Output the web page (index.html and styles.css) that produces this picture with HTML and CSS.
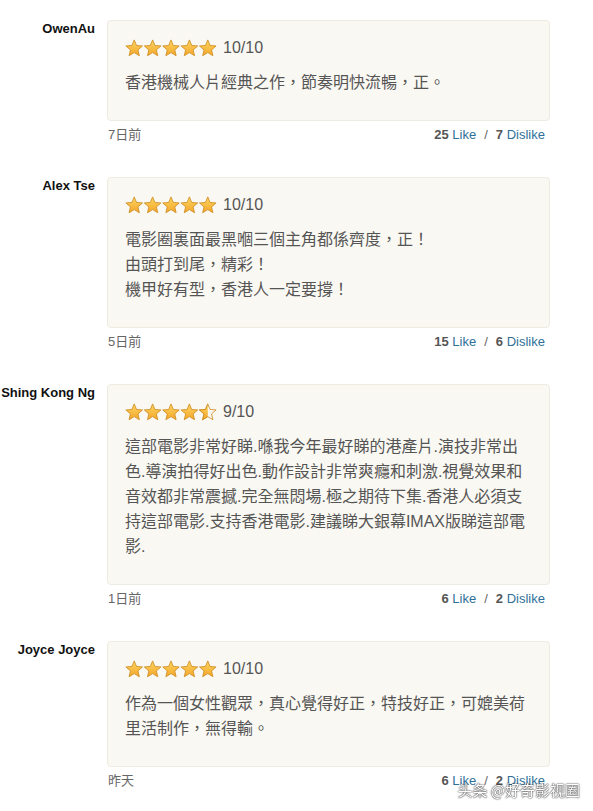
FILE: index.html
```html
<!DOCTYPE html>
<html lang="zh-Hant">
<head>
<meta charset="utf-8">
<title>Reviews</title>
<link rel="stylesheet" href="styles.css">
</head>
<body>
<svg class="defs" width="0" height="0" aria-hidden="true">
  <defs>
    <linearGradient id="gold" x1="0" y1="0" x2="0" y2="1">
      <stop offset="0" stop-color="#fdd763"/>
      <stop offset="1" stop-color="#f3a62a"/>
    </linearGradient>
    <clipPath id="lefthalf"><rect x="0" y="0" width="10" height="20"/></clipPath>
    <polygon id="star" points="10,1 12.53,7.02 19.03,7.56 14.09,11.83 15.58,18.19 10,14.8 4.42,18.19 5.91,11.83 0.97,7.56 7.47,7.02"/>
  </defs>
</svg>

<div class="list">
  <div class="review">
    <div class="name">OwenAu</div>
    <div class="main">
      <div class="card">
        <div class="rating">
          <svg class="stars" viewBox="0 0 100 20" width="92" height="18.4">
            <use href="#star" class="full"/>
            <use href="#star" class="full" x="20"/>
            <use href="#star" class="full" x="40"/>
            <use href="#star" class="full" x="60"/>
            <use href="#star" class="full" x="80"/>
          </svg>
          <span class="score">10/10</span>
        </div>
        <p class="text">香港機械人片經典之作，節奏明快流暢，正。</p>
      </div>
      <div class="footer">
        <span class="date">7日前</span>
        <span class="votes"><b>25</b> <a>Like</a><span class="sep">/</span><b>7</b> <a>Dislike</a></span>
      </div>
    </div>
  </div>

  <div class="review">
    <div class="name">Alex Tse</div>
    <div class="main">
      <div class="card">
        <div class="rating">
          <svg class="stars" viewBox="0 0 100 20" width="92" height="18.4">
            <use href="#star" class="full"/>
            <use href="#star" class="full" x="20"/>
            <use href="#star" class="full" x="40"/>
            <use href="#star" class="full" x="60"/>
            <use href="#star" class="full" x="80"/>
          </svg>
          <span class="score">10/10</span>
        </div>
        <p class="text">電影圈裏面最黑嗰三個主角都係齊度，正！<br>由頭打到尾，精彩！<br>機甲好有型，香港人一定要撐！</p>
      </div>
      <div class="footer">
        <span class="date">5日前</span>
        <span class="votes"><b>15</b> <a>Like</a><span class="sep">/</span><b>6</b> <a>Dislike</a></span>
      </div>
    </div>
  </div>

  <div class="review">
    <div class="name">Shing Kong Ng</div>
    <div class="main">
      <div class="card">
        <div class="rating">
          <svg class="stars" viewBox="0 0 100 20" width="92" height="18.4">
            <use href="#star" class="full"/>
            <use href="#star" class="full" x="20"/>
            <use href="#star" class="full" x="40"/>
            <use href="#star" class="full" x="60"/>
            <g transform="translate(80 0)">
              <use href="#star" class="empty"/>
              <use href="#star" class="full" clip-path="url(#lefthalf)"/>
            </g>
          </svg>
          <span class="score">9/10</span>
        </div>
        <p class="text">這部電影非常好睇.喺我今年最好睇的港產片.演技非常出色.導演拍得好出色.動作設計非常爽癮和刺激.視覺效果和音效都非常震撼.完全無悶場.極之期待下集.香港人必須支持這部電影.支持香港電影.建議睇大銀幕IMAX版睇這部電影.</p>
      </div>
      <div class="footer">
        <span class="date">1日前</span>
        <span class="votes"><b>6</b> <a>Like</a><span class="sep">/</span><b>2</b> <a>Dislike</a></span>
      </div>
    </div>
  </div>

  <div class="review">
    <div class="name">Joyce Joyce</div>
    <div class="main">
      <div class="card">
        <div class="rating">
          <svg class="stars" viewBox="0 0 100 20" width="92" height="18.4">
            <use href="#star" class="full"/>
            <use href="#star" class="full" x="20"/>
            <use href="#star" class="full" x="40"/>
            <use href="#star" class="full" x="60"/>
            <use href="#star" class="full" x="80"/>
          </svg>
          <span class="score">10/10</span>
        </div>
        <p class="text">作為一個女性觀眾，真心覺得好正，特技好正，可媲美荷里活制作，無得輸。</p>
      </div>
      <div class="footer">
        <span class="date">昨天</span>
        <span class="votes"><b>6</b> <a>Like</a><span class="sep">/</span><b>2</b> <a>Dislike</a></span>
      </div>
    </div>
  </div>
</div>

<div class="watermark">头条 @好奇影视圈</div>
</body>
</html>
```

FILE: styles.css
```css
html, body {
  margin: 0;
  padding: 0;
  background: #ffffff;
}

body {
  font-family: "Liberation Sans", "Noto Sans CJK TC", sans-serif;
  color: #555555;
}

.defs {
  position: absolute;
  width: 0;
  height: 0;
  overflow: hidden;
}

.list {
  padding-top: 20px;
}

.review {
  display: flex;
  gap: 12px;
  margin-bottom: 34px;
}

.name {
  width: 95px;
  flex: none;
  text-align: right;
  font-weight: bold;
  font-size: 13px;
  line-height: 16px;
  padding-top: 1px;
  color: #111111;
}

.main {
  width: 443px;
  flex: none;
}

.card {
  background: #faf8f2;
  border: 1px solid #eeebe1;
  border-radius: 4px;
  padding: 17px 18px 25px 17px;
}

.rating {
  display: flex;
  align-items: center;
  height: 20px;
  margin-bottom: 12px;
}

.stars {
  display: block;
  flex: none;
}

.stars .full {
  fill: url(#gold);
  stroke: #cf8a1e;
  stroke-width: 0.9;
  stroke-linejoin: round;
}

.stars .empty {
  fill: none;
  stroke: #cf8a1e;
  stroke-width: 0.9;
  stroke-linejoin: round;
}

.score {
  margin-left: 6px;
  font-size: 16px;
  line-height: 20px;
  color: #555555;
}

.text {
  margin: 0;
  font-size: 16px;
  line-height: 25px;
  color: #555555;
}

.footer {
  display: flex;
  justify-content: space-between;
  align-items: center;
  margin-top: 6px;
  padding: 0 5px 0 1px;
  font-size: 13px;
  line-height: 16px;
}

.date {
  color: #666666;
}

.votes b {
  color: #555555;
}

.votes a {
  color: #2f7099;
}

.sep {
  color: #666666;
  margin: 0 8px;
}

.watermark {
  position: fixed;
  right: 13px;
  bottom: 11px;
  font-family: "Noto Sans CJK SC", sans-serif;
  font-size: 15px;
  line-height: 20px;
  color: #ffffff;
  text-shadow: 0 0 2px rgba(0, 0, 0, 0.75), 0 0 1px rgba(0, 0, 0, 0.9);
}
```
